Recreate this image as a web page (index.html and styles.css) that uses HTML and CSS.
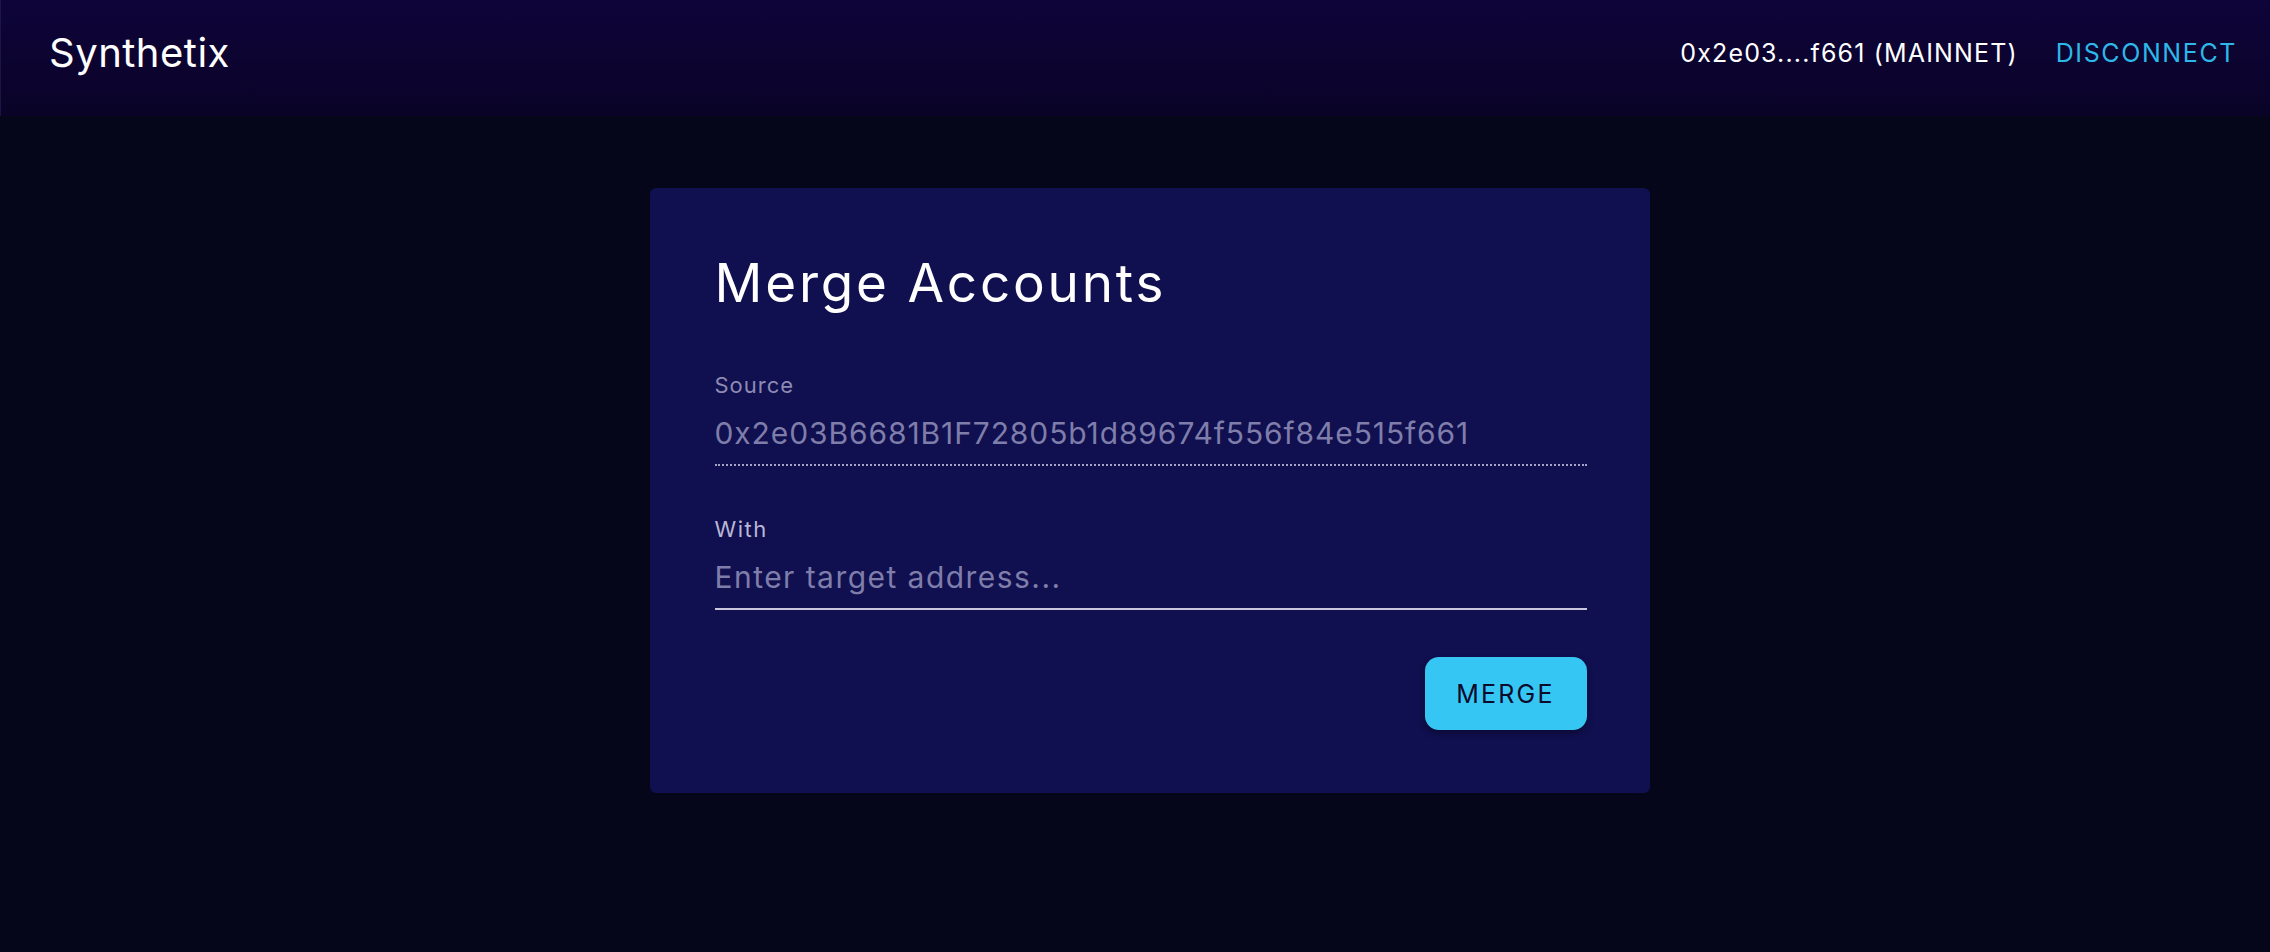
FILE: index.html
```html
<!DOCTYPE html>
<html lang="en">
<head>
<meta charset="utf-8">
<title>Synthetix - Merge Accounts</title>
<link rel="stylesheet" href="styles.css">
</head>
<body>
<header class="topbar">
  <div class="brand">Synthetix</div>
  <nav class="account">
    <span class="wallet">0x2e03....f661 (MAINNET)</span>
    <a class="disconnect" href="#">DISCONNECT</a>
  </nav>
</header>
<main class="page">
  <section class="card">
    <h1 class="card-title">Merge Accounts</h1>
    <div class="field">
      <label class="field-label muted" for="source">Source</label>
      <input class="field-input dotted" id="source" type="text" value="0x2e03B6681B1F72805b1d89674f556f84e515f661" disabled>
    </div>
    <div class="field field-with">
      <label class="field-label with" for="target">With</label>
      <input class="field-input solid" id="target" type="text" placeholder="Enter target address...">
    </div>
    <div class="actions">
      <button class="btn-merge" type="button">MERGE</button>
    </div>
  </section>
</main>
</body>
</html>
```
FILE: styles.css
```css
* { box-sizing: border-box; }
html, body { margin: 0; padding: 0; }
body {
  background: #06061a;
  font-family: Inter, "Noto Sans", sans-serif;
  color: #ffffff;
  min-height: 952px;
}
.topbar {
  height: 116px;
  display: flex;
  align-items: center;
  justify-content: space-between;
  padding: 0 33px 0 48px;
  background: linear-gradient(180deg, #0e043a 0%, #0a0327 100%);
  border-left: 1px solid #1a1646;
}
.brand {
  font-size: 40px;
  line-height: 48px;
  font-weight: 400;
  letter-spacing: 0.5px;
  color: #ffffff;
  margin-top: -10px;
}
.account {
  display: flex;
  align-items: center;
  gap: 38px;
  margin-top: -10px;
}
.wallet {
  font-size: 25px;
  line-height: 32px;
  letter-spacing: 1.15px;
  color: #ffffff;
}
.disconnect {
  font-size: 25px;
  line-height: 32px;
  letter-spacing: 1.6px;
  color: #2db8e8;
  text-decoration: none;
}
.page {
  display: flex;
  justify-content: center;
  padding: 72px 0 0 29px;
}
.card {
  width: 1000px;
  background: #100f4f;
  border-radius: 6px;
  padding: 63px 63px 63px 65px;
  display: flex;
  flex-direction: column;
}
.card-title {
  margin: 0;
  font-size: 53px;
  line-height: 64px;
  font-weight: 400;
  color: #ffffff;
  letter-spacing: 2.8px;
}
.field {
  display: flex;
  flex-direction: column;
  margin-top: 55px;
}
.field-with { margin-top: 48px; }
.field-label {
  font-size: 22px;
  line-height: 30px;
  letter-spacing: 1px;
  color: #bab7d6;
}
.field-label.with { letter-spacing: 1.5px; }
.field-label.muted { color: #8d8ab3; }
.field-input {
  margin: 13px 0 0;
  padding: 0 0 11px;
  border: none;
  background: transparent;
  font-family: inherit;
  font-size: 30px;
  line-height: 40px;
  height: 53px;
  color: #807eab;
  outline: none;
  width: 100%;
}
.field-input.dotted { letter-spacing: 0.9px; }
.field-input.solid { letter-spacing: 1.45px; }
.field-input:disabled {
  color: #7f7daa;
  -webkit-text-fill-color: #7f7daa;
  opacity: 1;
}
.field-input::placeholder { color: #7f7daa; opacity: 1; }
.dotted { border-bottom: 2px dotted #a6a3c8; }
.solid { border-bottom: 2px solid #cac7dd; }
.actions {
  display: flex;
  justify-content: flex-end;
  margin-top: 47px;
}
.btn-merge {
  width: 162px;
  height: 73px;
  border: none;
  border-radius: 14px;
  background: #36c6f4;
  color: #0b0b2b;
  font-family: inherit;
  font-size: 25px;
  letter-spacing: 2.2px;
  box-shadow: 0 3px 6px rgba(0, 0, 0, 0.35);
}
```
